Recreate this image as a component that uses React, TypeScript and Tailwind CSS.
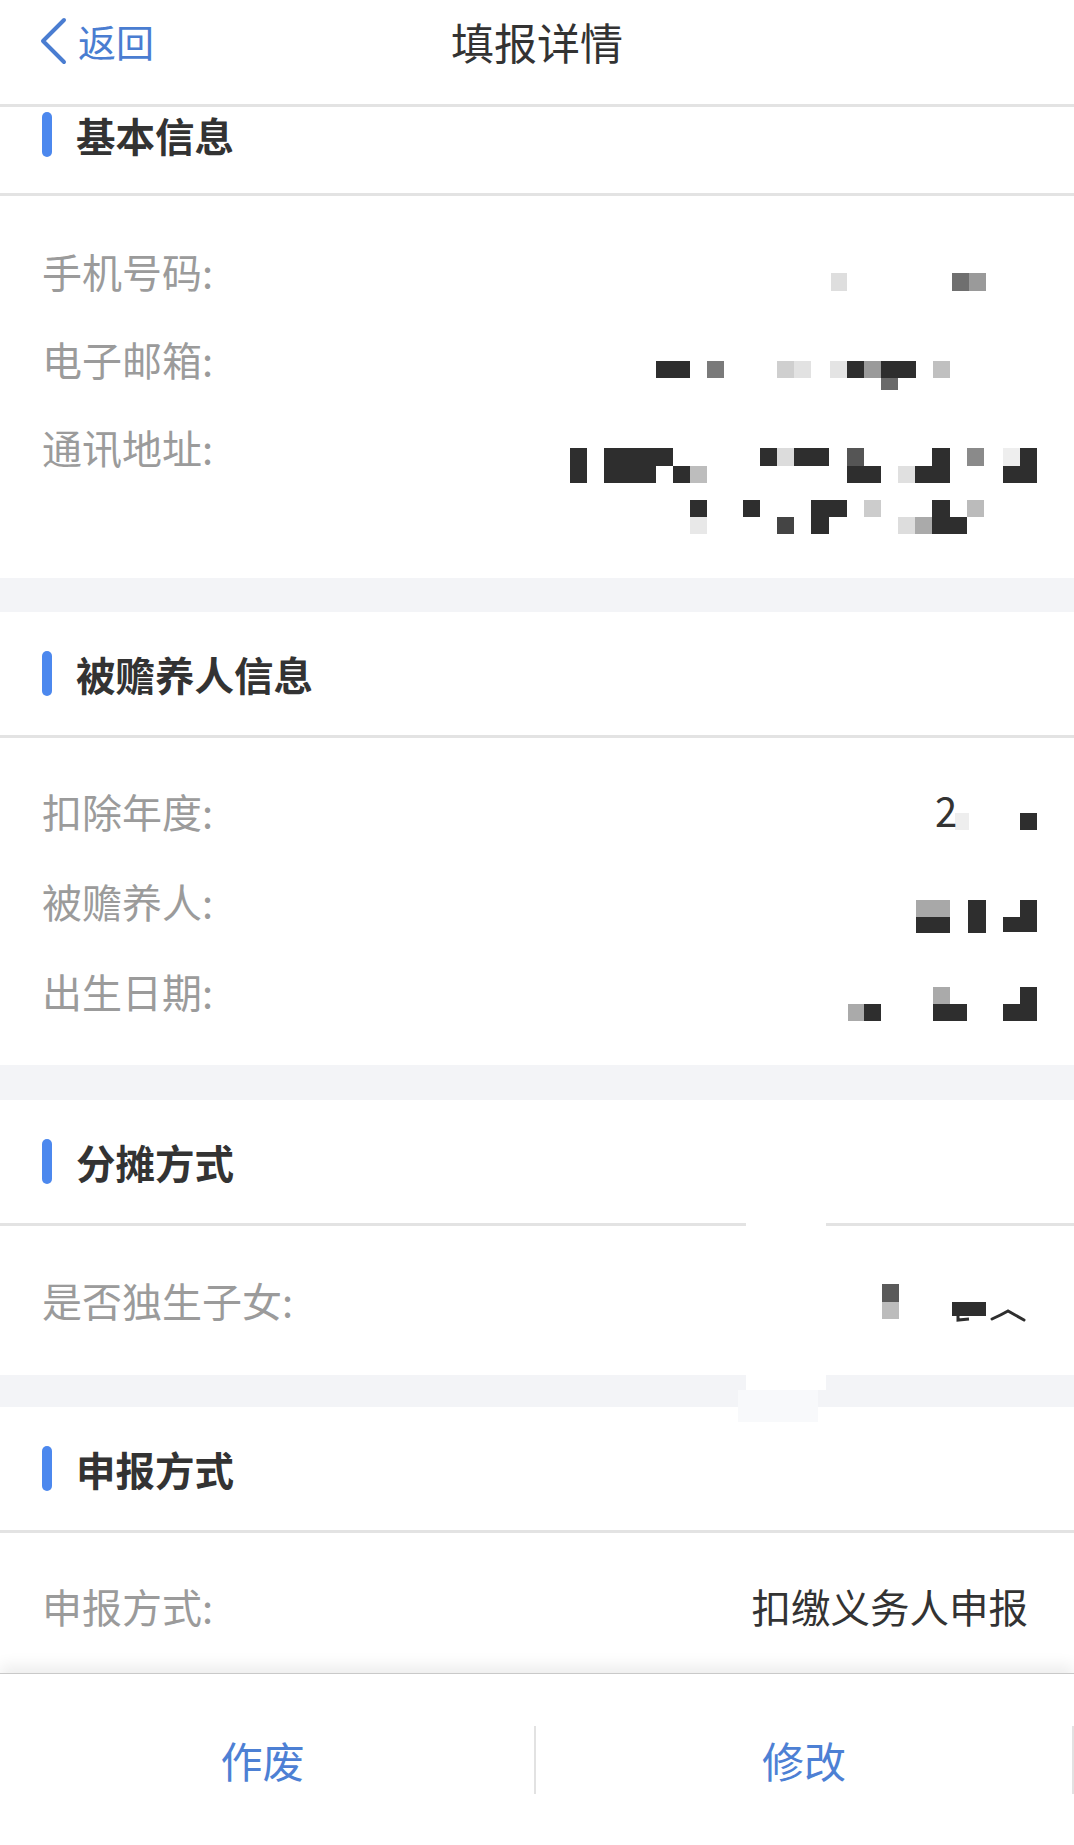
import React from "react";

type Cell = [number, number, number, number, string];

const FONT = '"Noto Sans CJK SC", "Noto Sans", sans-serif';
const D = "#2e2e2e";

function Mosaic({ top, h, cells, children }: { top: number; h: number; cells: Cell[]; children?: React.ReactNode }) {
  return (
    <svg width={480} height={h} viewBox={`560 ${top} 480 ${h}`} className="shrink-0 block">
      {cells.map((c, i) => (
        <rect key={i} x={c[0]} y={c[1]} width={c[2]} height={c[3]} fill={c[4]} />
      ))}
      {children}
    </svg>
  );
}

function SectionHeader({ title, first }: { title: string; first?: boolean }) {
  return (
    <div
      className={
        first
          ? "h-[89px] border-b-[3px] border-[#e3e3e3] flex items-start pt-[5px] pl-[42px]"
          : "h-[126px] border-b-[3px] border-[#e3e3e3] flex items-center pl-[42px]"
      }
    >
      <div className="flex items-center h-[45px] gap-[24px]">
        <div className="w-[10px] h-[45px] rounded-full bg-[#4c88ee]" />
        <span className="text-[39.5px] leading-none font-bold text-[#333333]">{title}</span>
      </div>
    </div>
  );
}

function Label({ children }: { children: React.ReactNode }) {
  return <span className="text-[40px] leading-none text-[#9b9b9b]">{children}</span>;
}

function Row({ label, top, h = 90, cells, children }: { label: string; top: number; h?: number; cells: Cell[]; children?: React.ReactNode }) {
  return (
    <div className="flex items-center justify-between pl-[42px] pr-[34px]" style={{ height: h }}>
      <Label>{label}</Label>
      <Mosaic top={top} h={h} cells={cells}>
        {children}
      </Mosaic>
    </div>
  );
}

const Band = ({ h }: { h: string }) => <div className={`${h} bg-[#f3f4f7]`} />;

export default function App() {
  const phone: Cell[] = [
    [831, 273, 16, 18, "#dedede"],
    [952, 273, 17, 18, "#6f6f6f"],
    [969, 273, 17, 18, "#9a9a9a"],
  ];
  const email: Cell[] = [
    [656, 361, 34, 17, D],
    [707, 361, 17, 17, "#7a7a7a"],
    [777, 361, 17, 17, "#cfcfcf"],
    [794, 361, 17, 17, "#e2e2e2"],
    [830, 361, 17, 17, "#e4e4e4"],
    [847, 361, 17, 17, D],
    [864, 361, 17, 17, "#9a9a9a"],
    [881, 361, 35, 17, D],
    [933, 361, 17, 17, "#c0c0c0"],
    [881, 378, 17, 12, "#6a6a6a"],
  ];
  const addr: Cell[] = [
    [570, 448, 17, 35, D],
    [604, 448, 52, 35, D],
    [656, 448, 17, 18, D],
    [673, 466, 17, 17, D],
    [690, 466, 17, 17, "#bdbdbd"],
    [760, 448, 17, 18, D],
    [777, 448, 17, 18, "#dcdcdc"],
    [794, 448, 35, 18, D],
    [847, 448, 17, 18, "#555555"],
    [847, 466, 34, 17, D],
    [898, 466, 17, 17, "#e0e0e0"],
    [915, 466, 17, 17, D],
    [932, 448, 18, 35, D],
    [967, 448, 17, 18, "#8a8a8a"],
    [1003, 448, 17, 18, "#eeeeee"],
    [1020, 448, 17, 18, D],
    [1003, 466, 34, 17, D],
    [690, 500, 17, 17, D],
    [690, 517, 17, 17, "#e8e8e8"],
    [743, 500, 17, 17, D],
    [777, 517, 17, 17, "#444444"],
    [811, 500, 36, 17, D],
    [811, 517, 18, 17, D],
    [864, 500, 17, 17, "#cccccc"],
    [898, 517, 17, 17, "#dddddd"],
    [915, 517, 17, 17, "#aaaaaa"],
    [932, 500, 18, 17, D],
    [932, 517, 35, 17, D],
    [967, 500, 17, 17, "#bbbbbb"],
  ];
  const year: Cell[] = [
    [955, 813, 14, 17, "#eeeeee"],
    [1020, 813, 17, 17, D],
  ];
  const dep: Cell[] = [
    [916, 900, 34, 17, "#a8a8a8"],
    [916, 917, 34, 16, D],
    [968, 900, 18, 33, D],
    [1020, 900, 17, 17, D],
    [1003, 917, 34, 15, D],
  ];
  const birth: Cell[] = [
    [848, 1004, 16, 17, "#aaaaaa"],
    [864, 1004, 17, 17, D],
    [933, 987, 17, 17, "#aaaaaa"],
    [933, 1004, 34, 17, D],
    [1020, 987, 17, 17, D],
    [1003, 1004, 34, 17, D],
  ];
  const only: Cell[] = [
    [882, 1282, 17, 18, "#5a5a5a"],
    [882, 1300, 17, 17, "#bcbcbc"],
    [952, 1300, 34, 14, D],
  ];

  return (
    <div className="relative w-[1074px] h-[1845px] overflow-hidden bg-white flex flex-col" style={{ fontFamily: FONT }}>
      {/* Header */}
      <header className="h-[107px] shrink-0 border-b-[3px] border-[#e3e3e3] bg-white">
        <div className="h-[82px] grid grid-cols-[1fr_auto_1fr] items-center">
          <div className="flex items-center pl-[39px] gap-[11px]">
            <svg width="28" height="48" viewBox="0 0 28 48" className="block">
              <polyline points="25,3 4,24 25,45" fill="none" stroke="#4a7dd1" strokeWidth="4" strokeLinecap="round" strokeLinejoin="round" />
            </svg>
            <span className="text-[38px] leading-none text-[#4a7dd1]">返回</span>
          </div>
          <span className="text-[43px] leading-none text-[#333333]">填报详情</span>
          <div />
        </div>
      </header>

      {/* Scroll content */}
      <main className="flex-1 overflow-hidden">
        <SectionHeader title="基本信息" first />
        <div className="pt-[31px] pb-[35px]">
          <Row label="手机号码:" top={227} h={88} cells={phone} />
          <Row label="电子邮箱:" top={315} h={88} cells={email} />
          <div className="flex items-start justify-between pl-[42px] pr-[34px] h-[140px]">
            <div className="h-[88px] flex items-center">
              <Label>通讯地址:</Label>
            </div>
            <Mosaic top={403} h={140} cells={addr} />
          </div>
        </div>
        <Band h="h-[34px]" />

        <SectionHeader title="被赡养人信息" />
        <div className="pt-[28px] pb-[29px]">
          <Row label="扣除年度:" top={766} cells={year}>
            <text x={935} y={827} fontSize={40} fill="#333333" fontFamily={FONT}>
              2
            </text>
          </Row>
          <Row label="被赡养人:" top={856} cells={dep} />
          <Row label="出生日期:" top={946} cells={birth} />
        </div>
        <Band h="h-[35px]" />

        <SectionHeader title="分摊方式" />
        <div className="pt-[29px] pb-[30px]">
          <Row label="是否独生子女:" top={1253} cells={only}>
            <path d="M958 1313 L958 1318 L969 1317" fill="none" stroke={D} strokeWidth={3} />
            <path d="M992 1317 Q1001 1313 1008 1309 L1024 1318" fill="none" stroke={D} strokeWidth={3} strokeLinecap="round" />
          </Row>
        </div>
        <Band h="h-[32px]" />

        <SectionHeader title="申报方式" />
        <div className="pt-[28px]">
          <div className="flex items-center justify-between h-[90px] pl-[42px] pr-[46px]">
            <Label>申报方式:</Label>
            <span className="text-[39.5px] leading-none text-[#333333]">扣缴义务人申报</span>
          </div>
        </div>
      </main>

      {/* Bottom bar */}
      <footer className="relative z-10 h-[172px] shrink-0 border-t border-[#c9c9c9] bg-white shadow-[0_-8px_14px_rgba(0,0,0,0.07)] flex items-center">
        <div className="w-[534px] shrink-0 flex items-center justify-center">
          <span className="text-[42px] leading-none text-[#4d80d4] mr-[9px]">作废</span>
        </div>
        <div className="w-[2px] h-[68px] bg-[#e2e2e2]" />
        <div className="flex-1 flex items-center justify-center">
          <span className="text-[42px] leading-none text-[#4d80d4]">修改</span>
        </div>
        <div className="w-[2px] h-[68px] bg-[#e2e2e2]" />
      </footer>

      {/* redaction patches over the divider and band */}
      <div className="absolute left-[746px] top-[1190px] w-[80px] h-[200px] bg-white" />
      <div className="absolute left-[738px] top-[1390px] w-[80px] h-[32px] bg-[#f8f9fb]" />
    </div>
  );
}
